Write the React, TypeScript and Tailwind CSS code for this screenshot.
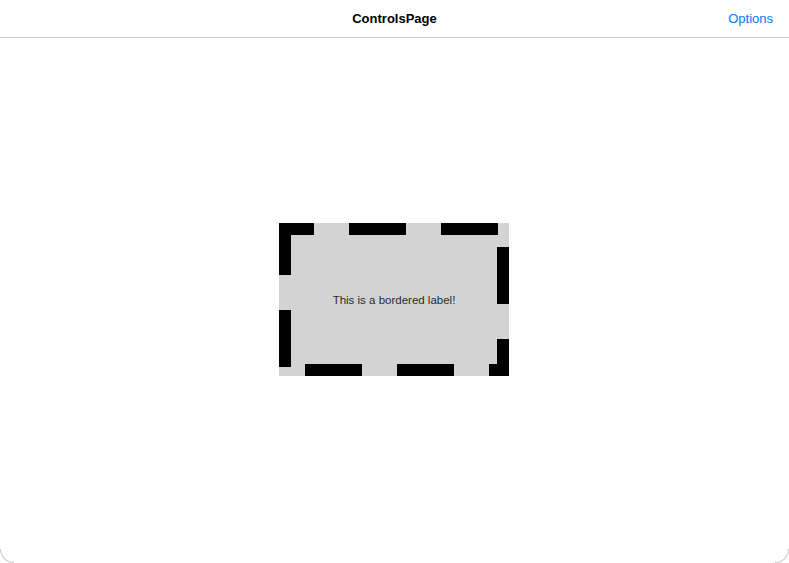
export default function App() {
  return (
    <div className="relative flex h-[563px] w-full flex-col bg-white font-['Liberation_Sans',Arial,sans-serif]">
      {/* nav bar */}
      <div className="relative flex h-[38px] shrink-0 items-center justify-center border-b border-[#c6c6c8]">
        <span className="text-[13px] font-semibold text-black">ControlsPage</span>
        <span className="absolute right-[16px] top-[9px] text-[13px] text-[#007aff]">Options</span>
      </div>

      {/* page body */}
      <div className="flex flex-1 items-start justify-center pt-[185px]">
        <div className="relative ml-[-1px] flex h-[153px] w-[230px] items-center justify-center bg-[#d3d3d3]">
          <span className="relative z-10 mt-[2px] text-[11.5px] text-[#2a2a2a]">This is a bordered label!</span>
          <svg className="absolute inset-0" width="230" height="153" viewBox="0 0 230 153">
            <rect
              x="0"
              y="0"
              width="230"
              height="153"
              fill="none"
              stroke="#000"
              strokeWidth="24"
              strokeDasharray="57 35"
              strokeDashoffset="22"
            />
          </svg>
        </div>
      </div>

      {/* rounded window corners */}
      <div className="absolute bottom-0 left-0 h-[14px] w-[14px] rounded-bl-[14px] border-b border-l border-[#c8c8c8]" />
      <div className="absolute bottom-0 right-0 h-[14px] w-[14px] rounded-br-[14px] border-b border-r border-[#c8c8c8]" />
    </div>
  )
}
